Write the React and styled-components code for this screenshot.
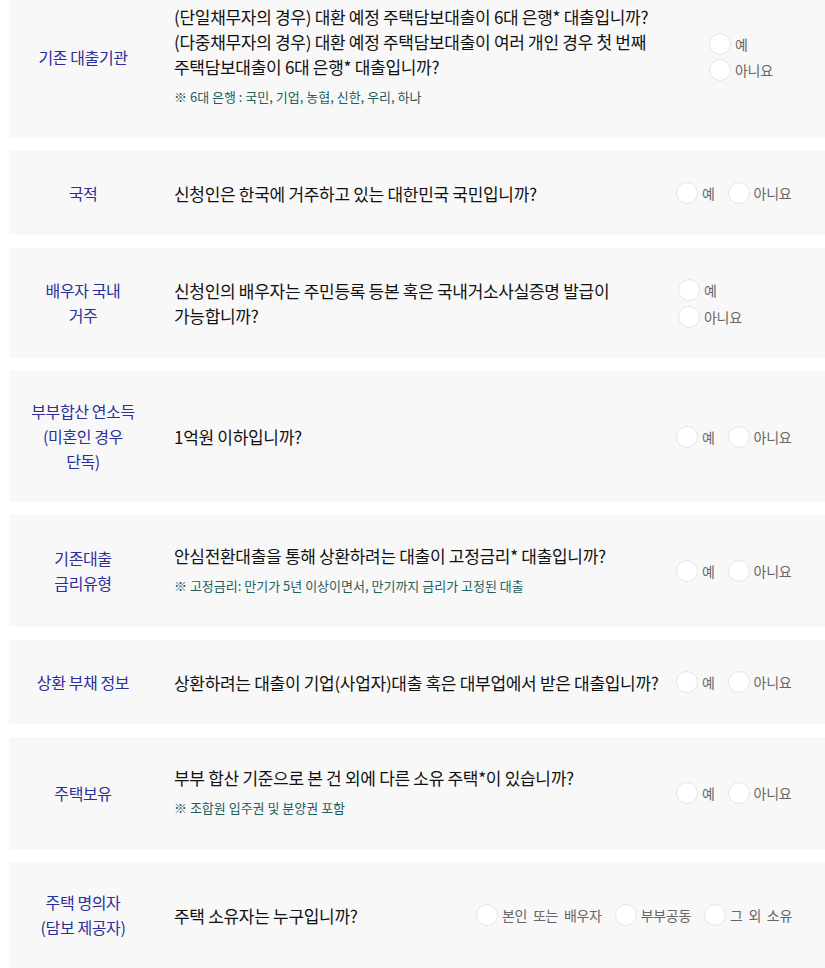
import React from "react";
import styled, { createGlobalStyle } from "styled-components";

const Global = createGlobalStyle`
  html, body { margin: 0; padding: 0; background: #ffffff; overflow: hidden; }
  body { font-family: "Noto Sans CJK KR", "Noto Sans", sans-serif; }
  * { box-sizing: border-box; }
`;

const List = styled.div`
  display: flex;
  flex-direction: column;
  gap: 13px;
  padding-left: 9px;
  margin-top: -24px;
`;

const Card = styled.section`
  display: grid;
  grid-template-columns: 148px 1fr auto;
  align-items: center;
  background: #f8f8f8;
  padding: 28px 33px 28px 0;
`;

const Label = styled.div`
  text-align: center;
  color: #2b2f9c;
  font-size: 16px;
  line-height: 25px;
  letter-spacing: -0.4px;
`;

const Question = styled.div`
  padding-left: 17px;
  min-height: 28px;
  display: flex;
  flex-direction: column;
  justify-content: center;
`;

const QText = styled.p`
  margin: 0;
  color: #111111;
  font-size: 17px;
  line-height: 25px;
  letter-spacing: -0.3px;
`;

const Note = styled.p`
  margin: 5px 0 0;
  color: #1d5f5c;
  font-size: 13px;
  line-height: 26px;
  letter-spacing: 0;
`;

const Answers = styled.div`
  display: flex;
  flex-direction: ${(p) => (p.$stack ? "column" : "row")};
  align-items: ${(p) => (p.$stack ? "flex-start" : "center")};
  gap: ${(p) => (p.$stack ? "0px" : "13px")};
  min-width: 116px;
  padding-left: ${(p) => p.$indent || 0}px;
`;

const RadioItem = styled.label`
  display: flex;
  align-items: center;
  height: ${(p) => (p.$tall ? 27 : 26)}px;
  gap: 4px;
  color: #666666;
  font-size: 14px;
  letter-spacing: -0.3px;
  word-spacing: 3px;
  cursor: pointer;
`;

const Circle = styled.span`
  width: 22px;
  height: 22px;
  border-radius: 50%;
  background: #ffffff;
  border: 1px solid #e6e6e6;
  flex: none;
`;

const Radio = ({ text, tall }) => (
  <RadioItem $tall={tall}>
    <Circle />
    <span>{text}</span>
  </RadioItem>
);

const rows = [
  {
    label: ["기존 대출기관"],
    q: [
      "(단일채무자의 경우) 대환 예정 주택담보대출이 6대 은행* 대출입니까?",
      "(다중채무자의 경우) 대환 예정 주택담보대출이 여러 개인 경우 첫 번째",
      "주택담보대출이 6대 은행* 대출입니까?",
    ],
    note: "※ 6대 은행 : 국민, 기업, 농협, 신한, 우리, 하나",
    answers: ["예", "아니요"],
    stack: true,
    indent: 33,
  },
  {
    label: ["국적"],
    q: ["신청인은 한국에 거주하고 있는 대한민국 국민입니까?"],
    answers: ["예", "아니요"],
  },
  {
    label: ["배우자 국내", "거주"],
    q: ["신청인의 배우자는 주민등록 등본 혹은 국내거소사실증명 발급이", "가능합니까?"],
    answers: ["예", "아니요"],
    stack: true,
    indent: 2,
  },
  {
    label: ["부부합산 연소득", "(미혼인 경우", "단독)"],
    q: ["1억원 이하입니까?"],
    answers: ["예", "아니요"],
  },
  {
    label: ["기존대출", "금리유형"],
    q: ["안심전환대출을 통해 상환하려는 대출이 고정금리* 대출입니까?"],
    note: "※ 고정금리: 만기가 5년 이상이면서, 만기까지 금리가 고정된 대출",
    answers: ["예", "아니요"],
  },
  {
    label: ["상환 부채 정보"],
    q: ["상환하려는 대출이 기업(사업자)대출 혹은 대부업에서 받은 대출입니까?"],
    answers: ["예", "아니요"],
  },
  {
    label: ["주택보유"],
    q: ["부부 합산 기준으로 본 건 외에 다른 소유 주택*이 있습니까?"],
    note: "※ 조합원 입주권 및 분양권 포함",
    answers: ["예", "아니요"],
  },
  {
    label: ["주택 명의자", "(담보 제공자)"],
    q: ["주택 소유자는 누구입니까?"],
    answers: ["본인 또는 배우자", "부부공동", "그 외 소유"],
  },
];

export default function App() {
  return (
    <>
      <Global />
      <List>
        {rows.map((r, i) => (
          <Card key={i}>
            <Label>
              {r.label.map((l, j) => (
                <div key={j}>{l}</div>
              ))}
            </Label>
            <Question>
              <QText>
                {r.q.map((l, j) => (
                  <React.Fragment key={j}>
                    {j > 0 && <br />}
                    {l}
                  </React.Fragment>
                ))}
              </QText>
              {r.note && <Note>{r.note}</Note>}
            </Question>
            <Answers $stack={r.stack} $indent={r.indent}>
              {r.answers.map((a) => (
                <Radio key={a} text={a} tall={r.stack && r.q.length === 2} />
              ))}
            </Answers>
          </Card>
        ))}
      </List>
    </>
  );
}
